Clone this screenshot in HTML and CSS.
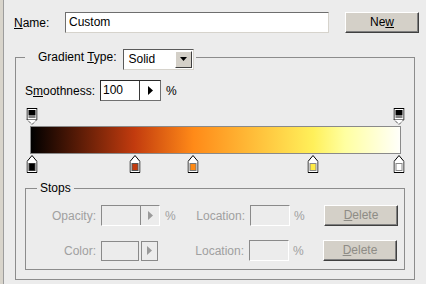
FILE: index.html
```html
<!DOCTYPE html>
<html>
<head>
<meta charset="utf-8">
<link rel="stylesheet" href="styles.css">
</head>
<body>
<div class="dlg">
  <div class="name-row">
    <label class="name-label"><u>N</u>ame:</label>
    <div class="textfield">Custom</div>
    <div class="btn new-btn">Ne<u>w</u></div>
  </div>

  <fieldset class="group">
    <legend class="group-legend">
      <span class="legend-text">Gradient <u>T</u>ype:</span>
      <div class="combo">
        <span class="combo-val">Solid</span>
        <span class="combo-btn"><svg width="7" height="4" viewBox="0 0 7 4"><path d="M0 0H7L3.5 4Z" fill="#000"/></svg></span>
      </div>
    </legend>

    <div class="smooth-row">
      <span class="smooth-label">S<u>m</u>oothness:</span>
      <div class="spin">
        <span class="spin-val">100</span>
        <span class="spin-btn"><svg width="5" height="9" viewBox="0 0 5 9"><path d="M0 0L5 4.5L0 9Z" fill="#000"/></svg></span>
      </div>
      <span class="pct">%</span>
    </div>

    <div class="editor">
      <div class="stops-row top">
        <svg class="stop" style="left:0%" width="11" height="17" viewBox="0 0 11 17"><rect x="0.5" y="0.5" width="10" height="11" fill="#fff" stroke="#000"/><rect x="2" y="2" width="7" height="5" fill="#000"/><rect x="2" y="7" width="7" height="3" fill="#808080"/><path d="M0.5 11.5L5.5 16.5L10.5 11.5" fill="#fff" stroke="#000" stroke-dasharray="1 1"/></svg>
        <svg class="stop" style="left:100%" width="11" height="17" viewBox="0 0 11 17"><rect x="0.5" y="0.5" width="10" height="11" fill="#fff" stroke="#000"/><rect x="2" y="2" width="7" height="5" fill="#000"/><rect x="2" y="7" width="7" height="3" fill="#808080"/><path d="M0.5 11.5L5.5 16.5L10.5 11.5" fill="#fff" stroke="#000" stroke-dasharray="1 1"/></svg>
      </div>
      <div class="bar"></div>
      <div class="stops-row bottom">
        <svg class="stop" style="left:0%" width="11" height="18" viewBox="0 0 11 18"><path d="M5.5 0.5L10.5 6.5V17.5H0.5V6.5Z" fill="#fff" stroke="#000"/><rect x="2.5" y="8.5" width="6" height="7" fill="#000" stroke="#333"/></svg>
        <svg class="stop" style="left:28.1%" width="11" height="18" viewBox="0 0 11 18"><path d="M5.5 0.5L10.5 6.5V17.5H0.5V6.5Z" fill="#fff" stroke="#000"/><rect x="2.5" y="8.5" width="6" height="7" fill="#C23B0E" stroke="#555"/></svg>
        <svg class="stop" style="left:44%" width="11" height="18" viewBox="0 0 11 18"><path d="M5.5 0.5L10.5 6.5V17.5H0.5V6.5Z" fill="#fff" stroke="#000"/><rect x="2.5" y="8.5" width="6" height="7" fill="#FF8A14" stroke="#777"/></svg>
        <svg class="stop" style="left:76.5%" width="11" height="18" viewBox="0 0 11 18"><path d="M5.5 0.5L10.5 6.5V17.5H0.5V6.5Z" fill="#fff" stroke="#000"/><rect x="2.5" y="8.5" width="6" height="7" fill="#FFEB45" stroke="#888"/></svg>
        <svg class="stop" style="left:100%" width="11" height="18" viewBox="0 0 11 18"><path d="M5.5 0.5L10.5 6.5V17.5H0.5V6.5Z" fill="#fff" stroke="#000"/><rect x="2.5" y="8.5" width="6" height="7" fill="#fff" stroke="#888"/></svg>
      </div>
    </div>

    <fieldset class="stops">
      <legend class="stops-legend">Stops</legend>
      <div class="srow">
        <span class="slabel">Opacity:</span>
        <div class="dspin">
          <span class="dspin-val"></span>
          <span class="dspin-btn"><svg width="5" height="9" viewBox="0 0 5 9"><path d="M0 0L5 4.5L0 9Z" fill="#9a9a9a"/></svg></span>
        </div>
        <span class="dpct">%</span>
        <span class="loclabel">Location:</span>
        <div class="dfield"></div>
        <span class="dpct2">%</span>
        <div class="btn del-btn"><u>D</u>elete</div>
      </div>
      <div class="srow">
        <span class="slabel">Color:</span>
        <div class="colorbox"></div>
        <div class="colorbtn"><svg width="5" height="9" viewBox="0 0 5 9"><path d="M0 0L5 4.5L0 9Z" fill="#9a9a9a"/></svg></div>
        <span class="loclabel wide">Location:</span>
        <div class="dfield"></div>
        <span class="dpct2">%</span>
        <div class="btn del-btn"><u>D</u>elete</div>
      </div>
    </fieldset>
  </fieldset>
</div>
</body>
</html>
```

FILE: styles.css
```css
* { box-sizing: border-box; }
html, body { margin: 0; padding: 0; }
body {
  background: #ECECEC;
  font-family: "Liberation Sans", Arial, sans-serif;
  font-size: 12px;
  color: #000;
  width: 426px;
  height: 284px;
  overflow: hidden;
}
u { text-decoration: underline; text-underline-offset: 1px; }

.dlg {
  height: 284px;
  border-left: 3px solid #D8D4CB;
  box-shadow: inset 1px 0 0 #9C9C9C;
  padding-top: 12px;
}

.name-row {
  display: flex;
  align-items: center;
  padding-left: 11px;
  height: 21px;
}
.name-label { width: 51px; }
.textfield {
  width: 264px;
  height: 21px;
  background: #fff;
  border: 1px solid;
  border-color: #6E6E6E #D6D3CC #D6D3CC #6E6E6E;
  padding: 2px 0 0 3px;
  line-height: 15px;
}
.btn {
  background: #D4D0C8;
  border: 1px solid;
  border-color: #fff #404040 #404040 #fff;
  box-shadow: inset -1px -1px 0 #808080;
  text-align: center;
  line-height: 18px;
}
.new-btn {
  margin-left: 16px;
  width: 74px;
  height: 21px;
}

.group {
  margin: 16px 0 0 12px;
  width: 400px;
  border: 1px solid #8C8C8C;
  padding: 0 9px 9px;
}
.group-legend {
  display: flex;
  align-items: center;
  height: 16px;
  padding: 0 2px 0 13px;
}
.legend-text { margin-right: 6px; }
.combo {
  margin-top: 4px;
  width: 71px;
  height: 21px;
  background: #fff;
  border: 1px solid;
  border-color: #5A5A5A #D6D3CC #D6D3CC #5A5A5A;
  display: flex;
  align-items: center;
  justify-content: space-between;
  padding: 0 1px 0 5px;
}
.combo-btn {
  width: 17px;
  height: 17px;
  background: #D4D0C8;
  border: 1px solid;
  border-color: #fff #404040 #404040 #fff;
  display: flex;
  align-items: center;
  justify-content: center;
}

.smooth-row {
  display: flex;
  align-items: center;
  margin-top: 15px;
  height: 21px;
}
.smooth-label { width: 75px; }
.spin {
  width: 61px;
  height: 21px;
  background: #fff;
  border: 1px solid;
  border-color: #2A2A2A #707070 #707070 #2A2A2A;
  display: flex;
}
.spin-val {
  width: 39px;
  border-right: 1px solid #3A3A3A;
  padding: 2px 0 0 2px;
  line-height: 15px;
}
.spin-btn {
  flex: 1;
  display: flex;
  align-items: center;
  justify-content: center;
}
.pct { margin-left: 5px; }

.editor {
  margin: 7px 0 0 5px;
  width: 371px;
}
.stops-row {
  position: relative;
  margin: 0 2px;
}
.stops-row.top { height: 18px; }
.stops-row.bottom { height: 18px; margin-top: 1px; }
.stop {
  position: absolute;
  top: 0;
  transform: translateX(-5.5px);
  display: block;
}
.bar {
  height: 28px;
  border: 1px solid #8A8A8A;
  background: linear-gradient(to right, #000 0%, #C23B0E 28%, #FF8A18 44%, #FFF05A 76.5%, #FFFFA0 85%, #FFFFFA 100%);
}

.stops {
  margin: 9px 0 0 0;
  width: 380px;
  border: 1px solid #8C8C8C;
  padding: 10px 0 8px 0;
}
.stops-legend {
  margin-left: 11px;
  padding: 0 3px;
  line-height: 13px;
}
.srow {
  display: flex;
  align-items: center;
  height: 21px;
  color: #A0A0A0;
}
.srow + .srow { margin-top: 14px; }
.slabel {
  width: 70px;
  text-align: right;
  margin-right: 5px;
}
.dspin {
  width: 59px;
  height: 21px;
  border: 1px solid;
  border-color: #8A8A8A #fff #fff #8A8A8A;
  display: flex;
}
.dspin-val { width: 39px; border-right: 1px solid #8A8A8A; }
.dspin-btn { flex: 1; display: flex; align-items: center; justify-content: center; }
.dpct { width: 10px; margin-left: 5px; }
.loclabel {
  width: 70px;
  text-align: right;
  margin-right: 5px;
}
.loclabel.wide { width: 86px; }
.dfield {
  width: 40px;
  height: 21px;
  border: 1px solid;
  border-color: #8A8A8A #fff #fff #8A8A8A;
}
.dpct2 { width: 30px; margin-left: 4px; }
.del-btn {
  width: 74px;
  height: 21px;
  color: #8E8C86;
}
.colorbox {
  width: 38px;
  height: 20px;
  border: 1px solid #8A8A8A;
}
.colorbtn {
  margin-left: 2px;
  width: 17px;
  height: 20px;
  border: 1px solid #8A8A8A;
  display: flex;
  align-items: center;
  justify-content: center;
}
```
